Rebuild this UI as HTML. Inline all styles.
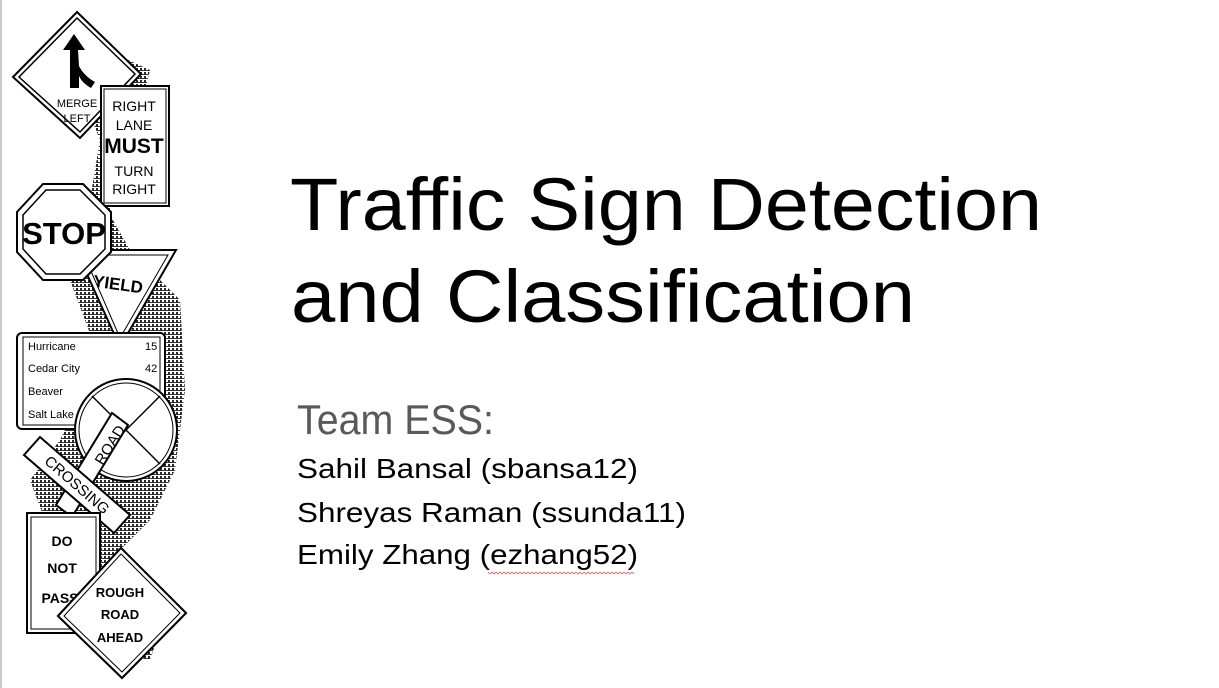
<!DOCTYPE html>
<html><head><meta charset="utf-8"><style>
html,body{margin:0;padding:0;background:#fff;width:1219px;height:688px;overflow:hidden}
svg{display:block}
</style></head><body>
<svg width="1219" height="688" viewBox="0 0 1219 688" xmlns="http://www.w3.org/2000/svg" font-family="Liberation Sans, Arial, sans-serif">
<defs>
<pattern id="dots" width="4" height="4" patternUnits="userSpaceOnUse">
<rect width="4" height="4" fill="#fff"/>
<rect x="0" y="0" width="2" height="3" fill="#111"/>
<rect x="2" y="2" width="2" height="1" fill="#222"/>
</pattern>
</defs>
<rect x="0" y="0" width="2" height="688" fill="#c8c8c8"/>
<g fill="url(#dots)">
<path d="M95 45 L150 70 L140 110 L120 150 L110 215 L130 250 L180 300 L185 390 L175 470 L150 520 L110 560 L170 600 L150 660 L100 650 L60 560 L30 480 L60 440 L100 360 L70 280 L90 200 L100 140 L80 90Z" opacity="0.9"/>
</g>
<g stroke="#000" fill="#fff">
<path d="M77 12 L141 74 L80 138 L13 77Z" stroke-width="2"/>
<path d="M77 18 L135 74 L80 132 L19 77Z" stroke-width="1.5"/>
<rect x="101" y="86" width="68" height="120" stroke-width="2"/>
<rect x="104" y="89" width="62" height="114" stroke-width="1"/>
<path d="M76 250 L176 250 L120 347Z" stroke-width="2"/>
<path d="M84 255 L168 255 L120 338Z" stroke-width="1"/>
<path d="M43 184 L83 184 L111 212 L111 252 L83 280 L43 280 L17 252 L17 212Z" stroke-width="2"/>
<path d="M46 190 L80 190 L105 215 L105 249 L80 274 L46 274 L23 249 L23 215Z" stroke-width="1.5"/>
<rect x="17" y="333" width="148" height="96" rx="5" stroke-width="2"/>
<rect x="23" y="337" width="137" height="88" stroke-width="1"/>
</g>
<path d="M70 88 L70 50 L63 50 L74 34 L85 50 L78 50 L79 66 Q84 76 95 82 L91 88 Q82 83 79 76 L79 88Z" fill="#000"/>
<g fill="#000" text-anchor="middle">
<text x="77" y="107" font-size="11">MERGE</text>
<text x="77" y="122" font-size="11">LEFT</text>
<text x="134" y="111" font-size="14">RIGHT</text>
<text x="134" y="130" font-size="14">LANE</text>
<text x="134" y="153" font-size="21" font-weight="bold">MUST</text>
<text x="134" y="176" font-size="14">TURN</text>
<text x="134" y="194" font-size="14">RIGHT</text>
<text x="64" y="244" font-size="31" font-weight="bold">STOP</text>
<text x="118" y="290" font-size="17" font-weight="bold" transform="rotate(8 118 285)">YIELD</text>
</g>
<g font-size="11" fill="#000">
<text x="28" y="350">Hurricane</text><text x="145" y="350">15</text>
<text x="28" y="372">Cedar City</text><text x="145" y="372">42</text>
<text x="28" y="395">Beaver</text>
<text x="28" y="418">Salt Lake</text>
</g>
<g stroke="#000" fill="#fff">
<circle cx="126" cy="430" r="51" stroke-width="2"/>
<circle cx="126" cy="430" r="47" stroke-width="1"/>
<path d="M92 396 L160 464 M160 396 L92 464" stroke-width="1.5" fill="none"/>
<path d="M72 517 L128 425 L112 413 L56 505Z" stroke-width="2"/>
<path d="M24 455 L40 437 L130 515 L114 533Z" stroke-width="2"/>
<rect x="27" y="513" width="73" height="120" stroke-width="2"/>
<rect x="31" y="517" width="65" height="112" stroke-width="1"/>
<path d="M121 548 L186 613 L122 678 L58 616Z" stroke-width="2"/>
<path d="M121 554 L180 613 L122 672 L64 616Z" stroke-width="1"/>
</g>
<g fill="#000" text-anchor="middle">
<text x="77" y="490" font-size="15" transform="rotate(41 77 485)">CROSSING</text>
<text x="110" y="450" font-size="15" transform="rotate(-58 110 445)">ROAD</text>
<text x="62" y="546" font-size="14" font-weight="bold">DO</text>
<text x="62" y="573" font-size="14" font-weight="bold">NOT</text>
<text x="60" y="603" font-size="14" font-weight="bold">PASS</text>
</g>
<g stroke="#000" fill="#fff">
<path d="M121 548 L186 613 L122 678 L58 616Z" stroke-width="2"/>
<path d="M121 554 L180 613 L122 672 L64 616Z" stroke-width="1"/>
</g>
<g fill="#000" text-anchor="middle">
<text x="120" y="597" font-size="13" font-weight="bold">ROUGH</text>
<text x="120" y="619" font-size="13" font-weight="bold">ROAD</text>
<text x="120" y="642" font-size="13" font-weight="bold">AHEAD</text>
</g>
<g fill="#000">
<text x="290" y="230" font-size="74" textLength="752" lengthAdjust="spacingAndGlyphs">Traffic Sign Detection</text>
<text x="291" y="322" font-size="74" textLength="624" lengthAdjust="spacingAndGlyphs">and Classification</text>
<text x="297" y="434" font-size="42" fill="#595959" textLength="197" lengthAdjust="spacingAndGlyphs">Team ESS:</text>
<text x="297" y="478" font-size="28" textLength="341" lengthAdjust="spacingAndGlyphs">Sahil Bansal (sbansa12)</text>
<text x="297" y="522" font-size="28" textLength="389" lengthAdjust="spacingAndGlyphs">Shreyas Raman (ssunda11)</text>
<text x="297" y="564" font-size="28" textLength="341" lengthAdjust="spacingAndGlyphs">Emily Zhang (ezhang52)</text>
</g>
<path d="M488 572 l2 2 l2 -2 l2 2 l2 -2 l2 2 l2 -2 l2 2 l2 -2 l2 2 l2 -2 l2 2 l2 -2 l2 2 l2 -2 l2 2 l2 -2 l2 2 l2 -2 l2 2 l2 -2 l2 2 l2 -2 l2 2 l2 -2 l2 2 l2 -2 l2 2 l2 -2 l2 2 l2 -2 l2 2 l2 -2 l2 2 l2 -2 l2 2 l2 -2 l2 2 l2 -2 l2 2 l2 -2 l2 2 l2 -2 l2 2 l2 -2 l2 2 l2 -2 l2 2 l2 -2 l2 2 l2 -2 l2 2 l2 -2 l2 2 l2 -2 l2 2 l2 -2 l2 2 l2 -2 l2 2 l2 -2 l2 2 l2 -2 l2 2 l2 -2 l2 2 l2 -2 l2 2 l2 -2 l2 2 l2 -2 l2 2 l2 -2 l2 2" stroke="#e06060" stroke-width="0.8" fill="none"/>
</svg>
</body></html>
